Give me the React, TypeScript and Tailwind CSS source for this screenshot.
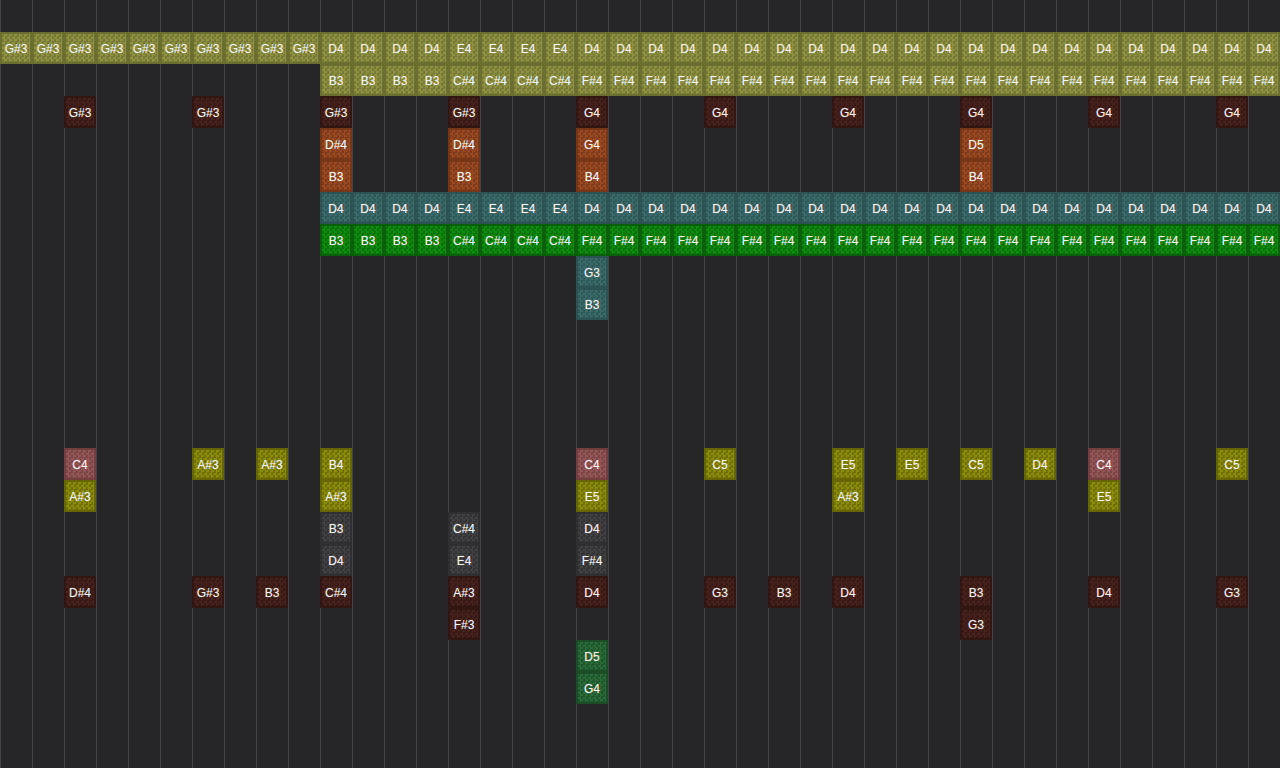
import React from 'react';

type Tone = 'olive' | 'maroon' | 'orange' | 'teal' | 'green' | 'pink' | 'yellow' | 'gray' | 'forest';

const toneClasses: Record<Tone, string> = {
  olive: 'border-[#6a6e30] bg-[image:repeating-conic-gradient(#8d9140_0_25%,#767a36_0_50%)]',
  maroon: 'border-[#331511] bg-[image:repeating-conic-gradient(#47211b_0_25%,#381915_0_50%)]',
  orange: 'border-[#773615] bg-[image:repeating-conic-gradient(#9a4a22_0_25%,#803c1a_0_50%)]',
  teal: 'border-[#2c5353] bg-[image:repeating-conic-gradient(#3c6a6a_0_25%,#2f5a5a_0_50%)]',
  green: 'border-[#0a600a] bg-[image:repeating-conic-gradient(#0f8c0f_0_25%,#0a720a_0_50%)]',
  pink: 'border-[#743e40] bg-[image:repeating-conic-gradient(#955658_0_25%,#7b4648_0_50%)]',
  yellow: 'border-[#666606] bg-[image:repeating-conic-gradient(#8c8c0c_0_25%,#707008_0_50%)]',
  gray: 'border-[#2f2f31] bg-[image:repeating-conic-gradient(#414143_0_25%,#333335_0_50%)]',
  forest: 'border-[#1b4d26] bg-[image:repeating-conic-gradient(#2b6b3a_0_25%,#1f572c_0_50%)]',
};

type Note = [number, string, Tone];

const run = (start: number, count: number, label: string, tone: Tone): Note[] =>
  Array.from({ length: count }, (_, i) => [start + i, label, tone] as Note);

const upper = (tone: Tone): Note[] => [...run(10, 4, 'D4', tone), ...run(14, 4, 'E4', tone), ...run(18, 22, 'D4', tone)];
const lower = (tone: Tone): Note[] => [...run(10, 4, 'B3', tone), ...run(14, 4, 'C#4', tone), ...run(18, 22, 'F#4', tone)];

const rows: Note[][] = [
  [],
  [...run(0, 10, 'G#3', 'olive'), ...upper('olive')],
  lower('olive'),
  [[2, 'G#3', 'maroon'], [6, 'G#3', 'maroon'], [10, 'G#3', 'maroon'], [14, 'G#3', 'maroon'], [18, 'G4', 'maroon'], [22, 'G4', 'maroon'], [26, 'G4', 'maroon'], [30, 'G4', 'maroon'], [34, 'G4', 'maroon'], [38, 'G4', 'maroon']],
  [[10, 'D#4', 'orange'], [14, 'D#4', 'orange'], [18, 'G4', 'orange'], [30, 'D5', 'orange']],
  [[10, 'B3', 'orange'], [14, 'B3', 'orange'], [18, 'B4', 'orange'], [30, 'B4', 'orange']],
  upper('teal'),
  lower('green'),
  [[18, 'G3', 'teal']],
  [[18, 'B3', 'teal']],
  [],
  [],
  [],
  [],
  [[2, 'C4', 'pink'], [6, 'A#3', 'yellow'], [8, 'A#3', 'yellow'], [10, 'B4', 'yellow'], [18, 'C4', 'pink'], [22, 'C5', 'yellow'], [26, 'E5', 'yellow'], [28, 'E5', 'yellow'], [30, 'C5', 'yellow'], [32, 'D4', 'yellow'], [34, 'C4', 'pink'], [38, 'C5', 'yellow']],
  [[2, 'A#3', 'yellow'], [10, 'A#3', 'yellow'], [18, 'E5', 'yellow'], [26, 'A#3', 'yellow'], [34, 'E5', 'yellow']],
  [[10, 'B3', 'gray'], [14, 'C#4', 'gray'], [18, 'D4', 'gray']],
  [[10, 'D4', 'gray'], [14, 'E4', 'gray'], [18, 'F#4', 'gray']],
  [[2, 'D#4', 'maroon'], [6, 'G#3', 'maroon'], [8, 'B3', 'maroon'], [10, 'C#4', 'maroon'], [14, 'A#3', 'maroon'], [18, 'D4', 'maroon'], [22, 'G3', 'maroon'], [24, 'B3', 'maroon'], [26, 'D4', 'maroon'], [30, 'B3', 'maroon'], [34, 'D4', 'maroon'], [38, 'G3', 'maroon']],
  [[14, 'F#3', 'maroon'], [30, 'G3', 'maroon']],
  [[18, 'D5', 'forest']],
  [[18, 'G4', 'forest']],
  [],
  [],
];

const columns = Array.from({ length: 40 }, (_, i) => i);

export default function App() {
  return (
    <div className="w-[1280px] h-[768px] overflow-hidden bg-[#262628] font-['Liberation_Sans',Arial,sans-serif]">
      {rows.map((notes, r) => (
        <div key={r} className="flex h-8">
          {columns.map((c) => {
            const note = notes.find((n) => n[0] === c);
            return (
              <div key={c} className="w-8 h-8 shrink-0 shadow-[inset_1px_0_0_#454547]">
                {note && (
                  <div className={`w-8 h-8 border-2 bg-[length:5px_5px] flex items-center justify-center pt-0.5 text-[12px] leading-none text-[#f4f4f0] [text-shadow:0_0_1px_rgba(255,255,255,0.35)] ${toneClasses[note[2]]}`}>
                    {note[1]}
                  </div>
                )}
              </div>
            );
          })}
        </div>
      ))}
    </div>
  );
}
